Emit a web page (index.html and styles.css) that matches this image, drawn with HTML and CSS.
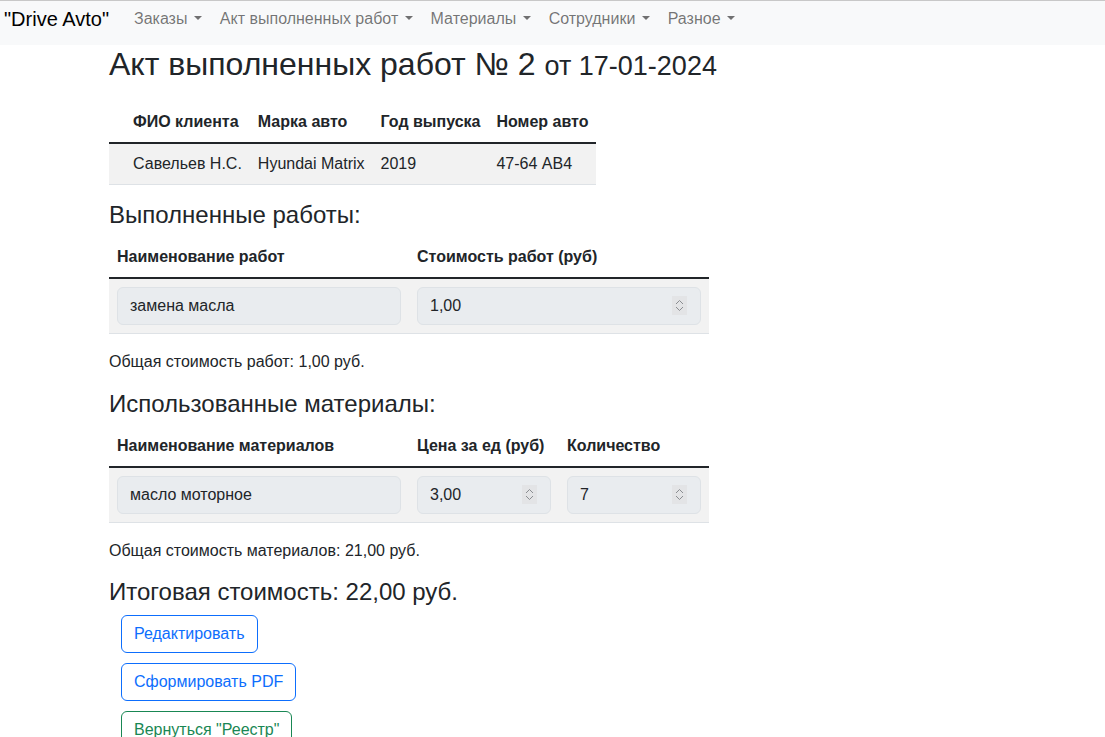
FILE: index.html
```html
<!DOCTYPE html>
<html lang="ru">
<head>
<meta charset="utf-8">
<title>Акт выполненных работ № 2</title>
<link rel="stylesheet" href="styles.css">
</head>
<body>
<nav class="navbar">
  <a class="brand" href="#">"Drive Avto"</a>
  <ul class="nav">
    <li><a class="nav-link toggle" href="#">Заказы</a></li>
    <li><a class="nav-link toggle" href="#">Акт выполненных работ</a></li>
    <li><a class="nav-link toggle" href="#">Материалы</a></li>
    <li><a class="nav-link toggle" href="#">Сотрудники</a></li>
    <li><a class="nav-link toggle" href="#">Разное</a></li>
  </ul>
</nav>
<main class="container">
  <h1 class="title">Акт выполненных работ № 2 <small>от 17-01-2024</small></h1>
  <table class="table client">
    <thead>
      <tr><th></th><th>ФИО клиента</th><th>Марка авто</th><th>Год выпуска</th><th>Номер авто</th></tr>
    </thead>
    <tbody>
      <tr><td></td><td>Савельев Н.С.</td><td>Hyundai Matrix</td><td>2019</td><td>47-64 АВ4</td></tr>
    </tbody>
  </table>

  <h4 class="section">Выполненные работы:</h4>
  <table class="table wide">
    <colgroup><col class="c-half"><col class="c-half"></colgroup>
    <thead>
      <tr><th>Наименование работ</th><th>Стоимость работ (руб)</th></tr>
    </thead>
    <tbody>
      <tr>
        <td><input class="field" type="text" value="замена масла" disabled></td>
        <td>
          <div class="num">
            <input class="field" type="text" value="1,00" disabled>
            <svg class="spin" width="15" height="19" viewBox="0 0 15 19" aria-hidden="true"><rect width="15" height="19" fill="#e3e4e6"/><path d="M4 8 L7.5 4.5 L11 8 M4 11 L7.5 14.5 L11 11" fill="none" stroke="#8a8d91" stroke-width="1"/></svg>
          </div>
        </td>
      </tr>
    </tbody>
  </table>
  <p class="total">Общая стоимость работ: 1,00 руб.</p>

  <h4 class="section">Использованные материалы:</h4>
  <table class="table wide">
    <colgroup><col class="c-half"><col class="c-quarter"><col class="c-quarter"></colgroup>
    <thead>
      <tr><th>Наименование материалов</th><th>Цена за ед (руб)</th><th>Количество</th></tr>
    </thead>
    <tbody>
      <tr>
        <td><input class="field" type="text" value="масло моторное" disabled></td>
        <td>
          <div class="num">
            <input class="field" type="text" value="3,00" disabled>
            <svg class="spin" width="15" height="19" viewBox="0 0 15 19" aria-hidden="true"><rect width="15" height="19" fill="#e3e4e6"/><path d="M4 8 L7.5 4.5 L11 8 M4 11 L7.5 14.5 L11 11" fill="none" stroke="#8a8d91" stroke-width="1"/></svg>
          </div>
        </td>
        <td>
          <div class="num">
            <input class="field" type="text" value="7" disabled>
            <svg class="spin" width="15" height="19" viewBox="0 0 15 19" aria-hidden="true"><rect width="15" height="19" fill="#e3e4e6"/><path d="M4 8 L7.5 4.5 L11 8 M4 11 L7.5 14.5 L11 11" fill="none" stroke="#8a8d91" stroke-width="1"/></svg>
          </div>
        </td>
      </tr>
    </tbody>
  </table>
  <p class="total">Общая стоимость материалов: 21,00 руб.</p>

  <h4 class="section grand">Итоговая стоимость: 22,00 руб.</h4>
  <div class="actions">
    <a class="btn btn-primary" href="#">Редактировать</a>
    <a class="btn btn-primary" href="#">Сформировать PDF</a>
    <a class="btn btn-success" href="#">Вернуться "Реестр"</a>
  </div>
</main>
</body>
</html>
```
FILE: styles.css
```css
* { box-sizing: border-box; }
html, body { margin: 0; padding: 0; }
body {
  font-family: "Liberation Sans", Arial, sans-serif;
  font-size: 16px;
  line-height: 1.5;
  color: #212529;
  background: #fff;
}
a { text-decoration: none; }

.navbar {
  display: flex;
  align-items: center;
  background: #f8f9fa;
  border-top: 1px solid #c8c8c8;
  height: 45px;
  padding: 0 4px;
}
.brand {
  color: #000;
  font-size: 20px;
  line-height: 30px;
  margin-right: 16px;
  padding-bottom: 8px;
}
.nav {
  display: flex;
  list-style: none;
  margin: 0;
  padding: 0;
  padding-bottom: 8px;
}
.nav-link {
  display: block;
  padding: 0 9px;
  color: rgba(0, 0, 0, 0.55);
}
.toggle::after {
  content: "";
  display: inline-block;
  margin-left: 0.4em;
  vertical-align: 0.255em;
  border-top: 0.3em solid;
  border-right: 0.3em solid transparent;
  border-left: 0.3em solid transparent;
}

.container {
  padding: 0 109px;
}
.title {
  font-size: 32px;
  font-weight: 400;
  line-height: 1.2;
  margin: 0 0 19px;
}
.title small { font-size: 27px; }

.table {
  border-collapse: collapse;
  margin-bottom: 16px;
}
.table th, .table td {
  padding: 8px;
  text-align: left;
  vertical-align: top;
  border-bottom: 1px solid #dee2e6;
}
.table th { font-weight: 700; }
.table thead th { border-bottom: 2px solid #212529; }
.table tbody tr { background: #f2f2f2; }
.client th:first-child, .client td:first-child { width: 16px; padding: 0; }

.wide { width: 600px; table-layout: fixed; }
.wide thead th { padding-top: 7px; }
.c-half { width: 300px; }
.c-quarter { width: 150px; }

.section {
  font-size: 24px;
  font-weight: 400;
  line-height: 1.2;
  margin: 0 0 8px;
}
.grand { margin-top: -1px; }
.total { margin: 0 0 16px; }

.field {
  display: block;
  width: 100%;
  height: 38px;
  padding: 6px 12px;
  font: inherit;
  color: #212529;
  background: #e9ecef;
  border: 1px solid #dee2e6;
  border-radius: 6px;
  opacity: 1;
  -webkit-text-fill-color: #212529;
}
.num { position: relative; }
.spin {
  position: absolute;
  right: 14px;
  top: 9px;
  display: block;
}

.actions {
  display: flex;
  flex-direction: column;
  align-items: flex-start;
  gap: 10px;
  padding: 0 12px;
}
.btn {
  display: inline-block;
  padding: 6px 12px;
  line-height: 24px;
  border: 1px solid;
  border-radius: 6px;
}
.btn-primary { color: #0d6efd; border-color: #0d6efd; }
.btn-success { color: #198754; border-color: #198754; }
```
